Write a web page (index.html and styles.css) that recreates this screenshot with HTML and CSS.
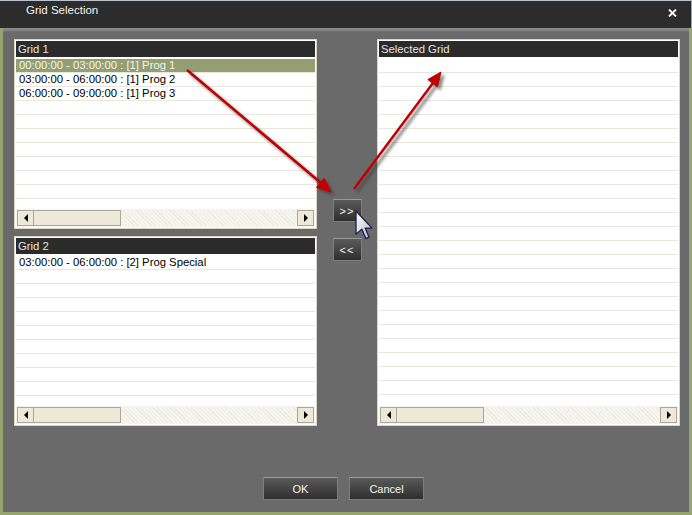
FILE: index.html
```html
<!DOCTYPE html>
<html lang="en">

<head>
    <meta charset="UTF-8">
    <title>Grid Selection</title>
    <link rel="stylesheet" href="styles.css">
</head>

<body>
    <div class="window">
        <div class="titlebar">
            <span class="title">Grid Selection</span>
            <svg class="close" width="9" height="8" viewBox="0 0 9 8">
                <path d="M1 0.5 L8 7.5 M8 0.5 L1 7.5" stroke="#fff" stroke-width="1.8" />
            </svg>
        </div>
        <div class="content">
            <div class="lists">
                <div class="col-left">
                    <div class="panel small">
                        <div class="panel-head">Grid 1</div>
                        <div class="rows">
                            <div class="row selected">00:00:00 - 03:00:00 : [1] Prog 1</div>
                            <div class="row">03:00:00 - 06:00:00 : [1] Prog 2</div>
                            <div class="row">06:00:00 - 09:00:00 : [1] Prog 3</div>
                        </div>
                        <div class="scrollbar">
                            <div class="sb-btn"><span class="tri left"></span></div>
                            <div class="sb-thumb"></div>
                            <div class="sb-track"></div>
                            <div class="sb-btn"><span class="tri right"></span></div>
                        </div>
                    </div>
                    <div class="panel small">
                        <div class="panel-head">Grid 2</div>
                        <div class="rows">
                            <div class="row">03:00:00 - 06:00:00 : [2] Prog Special</div>
                        </div>
                        <div class="scrollbar">
                            <div class="sb-btn"><span class="tri left"></span></div>
                            <div class="sb-thumb"></div>
                            <div class="sb-track"></div>
                            <div class="sb-btn"><span class="tri right"></span></div>
                        </div>
                    </div>
                </div>
                <div class="col-mid">
                    <button class="btn move">&gt;&gt;</button>
                    <button class="btn move">&lt;&lt;</button>
                </div>
                <div class="panel tall">
                    <div class="panel-head">Selected Grid</div>
                    <div class="rows"></div>
                    <div class="scrollbar">
                        <div class="sb-btn"><span class="tri left"></span></div>
                        <div class="sb-thumb"></div>
                        <div class="sb-track"></div>
                        <div class="sb-btn"><span class="tri right"></span></div>
                    </div>
                </div>
            </div>
            <div class="footer">
                <button class="btn action">OK</button>
                <button class="btn action">Cancel</button>
            </div>
        </div>

        <!-- annotation arrows and mouse cursor drawn over the dialog -->
        <svg class="overlay" width="692" height="515" viewBox="0 0 692 515">
            <defs>
                <filter id="blur" x="-20%" y="-20%" width="140%" height="140%">
                    <feGaussianBlur stdDeviation="1.5" />
                </filter>
                <linearGradient id="cur" x1="0" y1="0" x2="1" y2="1">
                    <stop offset="0" stop-color="#ffffff" />
                    <stop offset="1" stop-color="#b8b8b8" />
                </linearGradient>
            </defs>
            <g transform="translate(3,3)" fill="#3a3a3a" stroke="#3a3a3a" opacity="0.6" filter="url(#blur)">
                <line x1="187" y1="70" x2="321" y2="183" stroke-width="3" />
                <polygon points="316.4,187.5 324.2,178.3 331,192" />
                <line x1="354" y1="189" x2="433" y2="83" stroke-width="3" />
                <polygon points="437.4,86.8 427.8,79.6 441,72" />
            </g>
            <g fill="#c00000" stroke="#c00000">
                <line x1="187" y1="70" x2="321" y2="183" stroke-width="2.5" />
                <polygon points="316.4,187.5 324.2,178.3 331,192" />
                <line x1="354" y1="189" x2="433" y2="83" stroke-width="2.5" />
                <polygon points="437.4,86.8 427.8,79.6 441,72" />
            </g>
            <path transform="translate(356,211) scale(1.45)"
                d="M0 0 L0 16 L4 12.5 L6.8 19 L9 18 L6.3 11.8 L11 11.8 Z"
                fill="url(#cur)" stroke="#1c1c5a" stroke-width="0.9" stroke-linejoin="round" />
        </svg>
    </div>
</body>

</html>
```

FILE: styles.css
```css
body {
    margin: 0;
    background-color: #6a6a6a;
    font-family: 'Liberation Sans', Arial, sans-serif;
    font-size: 11px;
}

.window {
    position: relative;
    width: 692px;
    height: 515px;
    overflow: hidden;
}

.titlebar {
    height: 28px;
    box-sizing: border-box;
    background-color: #2c2c2c;
    border-top: 1px solid #b9c4d0;
    border-right: 1px solid #9aa4ae;
    display: flex;
    align-items: flex-start;
    justify-content: space-between;
    padding: 3px 14px 0 26px;
    color: #f2f2f2;
}

.title {
    line-height: 13px;
    font-size: 11.5px;
}

.close {
    margin-top: 5px;
}

.content {
    height: 487px;
    box-sizing: border-box;
    border-left: 3px solid #94a66e;
    border-right: 3px solid #94a66e;
    border-bottom: 3px solid #94a66e;
    background: linear-gradient(#8e8e8e 0, #7c7c7c 3px, #6a6a6a 4px);
    padding: 11px 9px 0 11px;
}

.lists {
    display: flex;
    height: 387px;
}

.col-left {
    display: flex;
    flex-direction: column;
    gap: 7px;
}

.col-mid {
    width: 60px;
    display: flex;
    flex-direction: column;
    align-items: center;
    gap: 16px;
    padding-top: 160px;
    box-sizing: border-box;
}

.panel {
    width: 303px;
    box-sizing: border-box;
    border: 1px solid #d8d4c6;
    background-color: #fff;
    padding: 1px;
    display: flex;
    flex-direction: column;
}

.small {
    height: 190px;
}

.tall {
    height: 387px;
}

.panel-head {
    height: 16px;
    line-height: 16px;
    background-color: #2b2b2b;
    color: #e4e4e4;
    padding-left: 2px;
    font-size: 11.3px;
    flex: none;
}

.rows {
    flex: 1;
    padding-top: 2px;
    background: repeating-linear-gradient(to bottom, #fff 0, #fff 13px, #e9e7dc 13px, #e9e7dc 14px);
    background-position: 0 2px;
    background-color: #fff;
}

.row {
    height: 13px;
    line-height: 13px;
    margin-bottom: 1px;
    padding-left: 3px;
    font-size: 11.3px;
    color: #000;
    white-space: nowrap;
}

.row.selected {
    background-color: #939f72;
    color: #f4f4f0;
}

.scrollbar {
    height: 18px;
    flex: none;
    display: flex;
    box-sizing: border-box;
    padding: 1px;
    background-color: #f4f3ee;
}

.sb-btn {
    width: 17px;
    height: 16px;
    box-sizing: border-box;
    background-color: #ece9d8;
    border: 1px solid #aca899;
    display: flex;
    align-items: center;
    justify-content: center;
}

.sb-thumb {
    width: 87px;
    box-sizing: border-box;
    background-color: #ece9d8;
    border: 1px solid #aca899;
    border-left: none;
}

.sb-track {
    flex: 1;
    background-color: #f6f5f0;
    background-image: repeating-linear-gradient(45deg, #ecebe4 0, #ecebe4 1px, transparent 1px, transparent 3px);
}

.tri {
    width: 0;
    height: 0;
    border-top: 4px solid transparent;
    border-bottom: 4px solid transparent;
}

.tri.left {
    border-right: 4px solid #000;
}

.tri.right {
    border-left: 4px solid #000;
}

.btn {
    font-family: 'Liberation Sans', Arial, sans-serif;
    font-size: 11px;
    color: #f4f4f4;
    background: linear-gradient(#5a5a5a, #2e2e2e);
    border: 1px solid #7e7e7e;
    border-top-color: #9a9a9a;
    border-radius: 1px;
    padding: 0;
    cursor: default;
}

.move {
    width: 29px;
    height: 23px;
    letter-spacing: 1px;
}

.footer {
    display: flex;
    justify-content: center;
    gap: 11px;
    margin-top: 51px;
    padding-right: 7px;
}

.action {
    width: 75px;
    height: 23px;
}

.overlay {
    position: absolute;
    left: 0;
    top: 0;
    pointer-events: none;
}
```
